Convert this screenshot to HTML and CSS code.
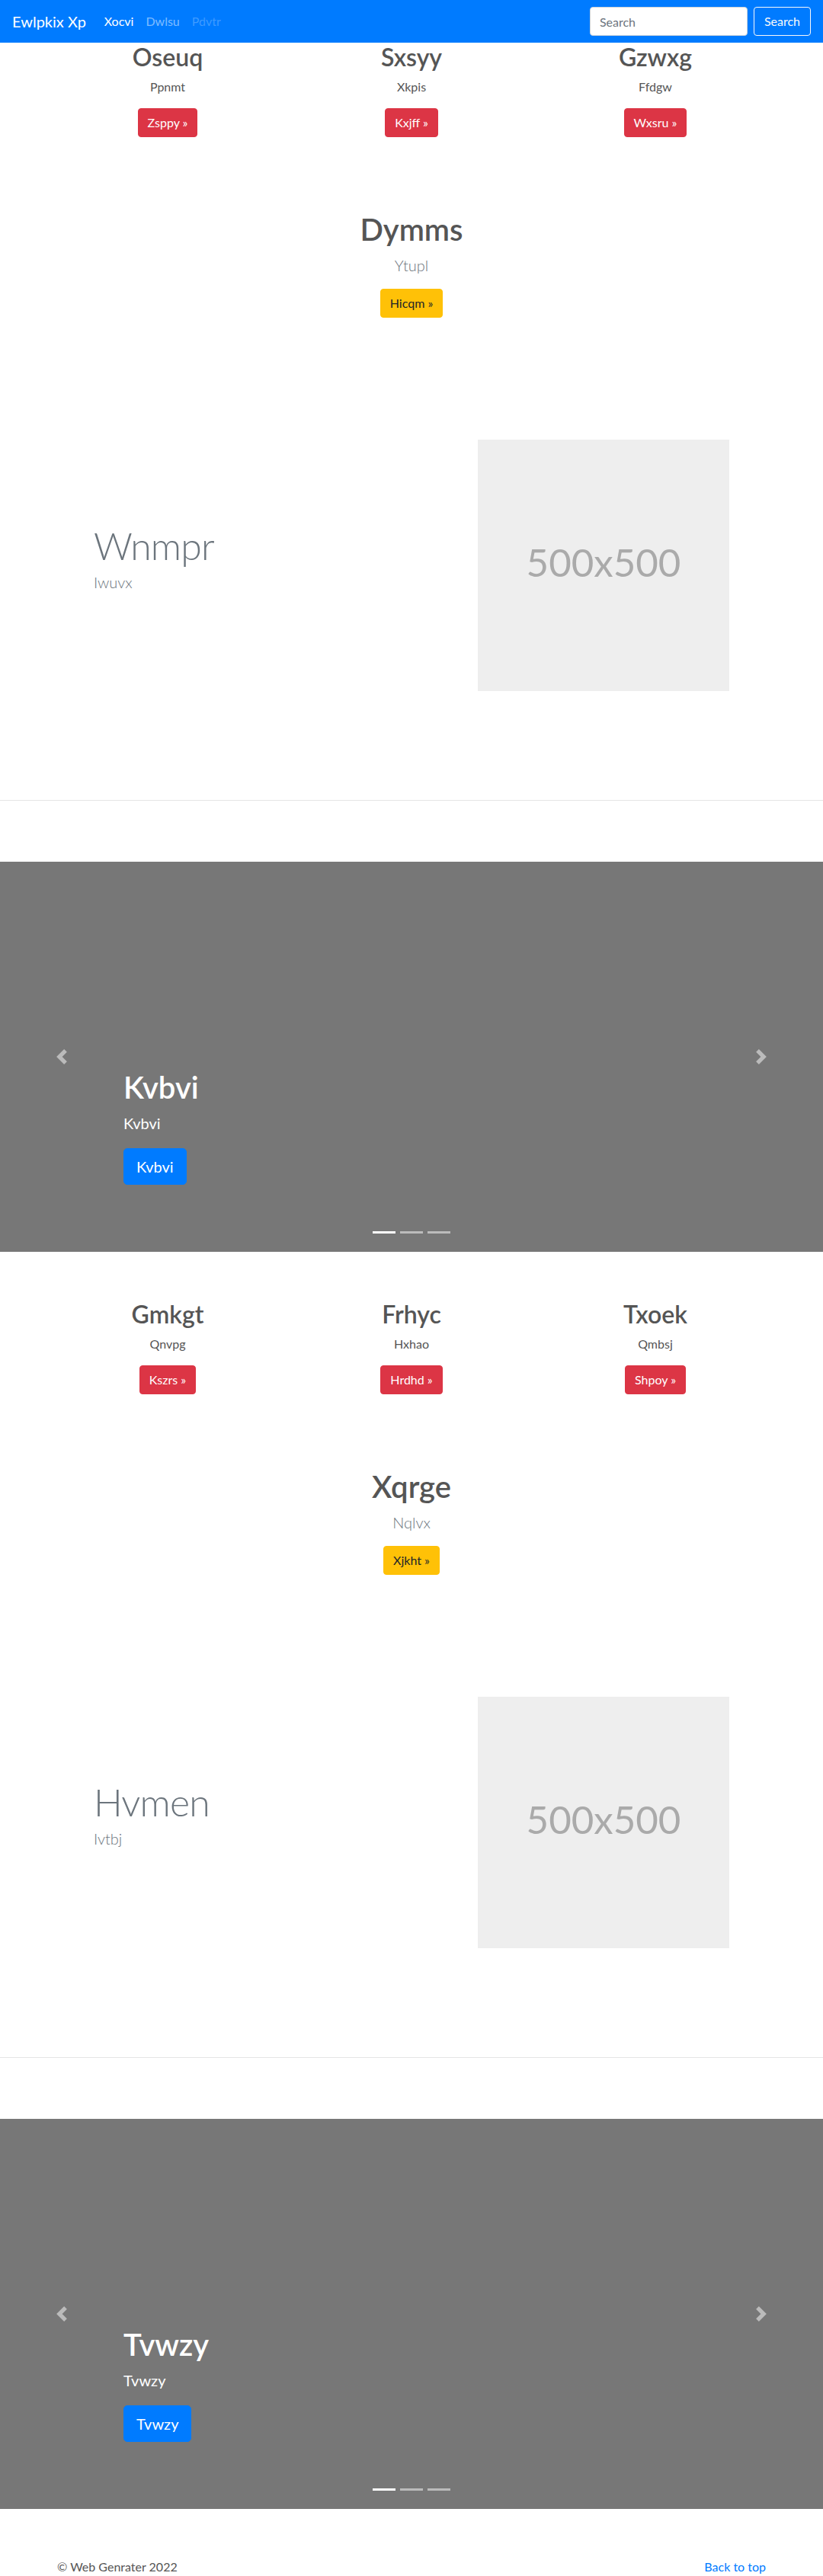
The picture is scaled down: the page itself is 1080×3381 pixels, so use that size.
FILE: index.html
```html
<!DOCTYPE html>
<html lang="en">
<head>
<meta charset="utf-8">
<title>Ewlpkix Xp</title>
<link rel="stylesheet" href="styles.css">
</head>
<body>
<nav class="navbar">
  <a class="brand" href="#">Ewlpkix Xp</a>
  <ul class="nav-links">
    <li><a class="nav-link active" href="#">Xocvi</a></li>
    <li><a class="nav-link" href="#">Dwlsu</a></li>
    <li><a class="nav-link disabled" href="#">Pdvtr</a></li>
  </ul>
  <form class="search">
    <input class="search-input" type="text" placeholder="Search">
    <button class="search-btn" type="button">Search</button>
  </form>
</nav>

<section class="block block-first">
  <div class="marketing">
    <div class="col">
      <h2 class="col-title">Oseuq</h2>
      <p class="col-text">Ppnmt</p>
      <a class="btn btn-danger" href="#">Zsppy &raquo;</a>
    </div>
    <div class="col">
      <h2 class="col-title">Sxsyy</h2>
      <p class="col-text">Xkpis</p>
      <a class="btn btn-danger" href="#">Kxjff &raquo;</a>
    </div>
    <div class="col">
      <h2 class="col-title">Gzwxg</h2>
      <p class="col-text">Ffdgw</p>
      <a class="btn btn-danger" href="#">Wxsru &raquo;</a>
    </div>
  </div>
  <div class="intro">
    <h1 class="intro-title">Dymms</h1>
    <p class="lead">Ytupl</p>
    <a class="btn btn-warning" href="#">Hicqm &raquo;</a>
  </div>
  <div class="featurette">
    <div class="featurette-text">
      <h2 class="featurette-heading">Wnmpr</h2>
      <p class="lead">Iwuvx</p>
    </div>
    <div class="featurette-media">
      <svg class="placeholder" width="330" height="330" viewBox="0 0 330 330" role="img" aria-label="500x500">
        <rect width="100%" height="100%" fill="#eee"/>
        <text x="50%" y="50%" dy=".3em" text-anchor="middle" fill="#aaa">500x500</text>
      </svg>
    </div>
  </div>
</section>
<hr class="divider">
<div class="carousel">
  <div class="carousel-caption">
    <h1 class="caption-title">Kvbvi</h1>
    <p class="caption-text">Kvbvi</p>
    <a class="btn btn-lg btn-primary" href="#">Kvbvi</a>
  </div>
  <a class="control control-prev" href="#" aria-label="Previous">
    <svg width="20" height="20" viewBox="0 0 8 8"><path d="M5.25 0l-4 4 4 4 1.5-1.5L4.25 4l2.5-2.5L5.25 0z"/></svg>
  </a>
  <a class="control control-next" href="#" aria-label="Next">
    <svg width="20" height="20" viewBox="0 0 8 8"><path d="M2.75 0l-1.5 1.5L3.75 4l-2.5 2.5L2.75 8l4-4-4-4z"/></svg>
  </a>
  <ol class="indicators">
    <li class="active"></li>
    <li></li>
    <li></li>
  </ol>
</div>

<section class="block block-second">
  <div class="marketing">
    <div class="col">
      <h2 class="col-title">Gmkgt</h2>
      <p class="col-text">Qnvpg</p>
      <a class="btn btn-danger" href="#">Kszrs &raquo;</a>
    </div>
    <div class="col">
      <h2 class="col-title">Frhyc</h2>
      <p class="col-text">Hxhao</p>
      <a class="btn btn-danger" href="#">Hrdhd &raquo;</a>
    </div>
    <div class="col">
      <h2 class="col-title">Txoek</h2>
      <p class="col-text">Qmbsj</p>
      <a class="btn btn-danger" href="#">Shpoy &raquo;</a>
    </div>
  </div>
  <div class="intro">
    <h1 class="intro-title">Xqrge</h1>
    <p class="lead">Nqlvx</p>
    <a class="btn btn-warning" href="#">Xjkht &raquo;</a>
  </div>
  <div class="featurette featurette-second">
    <div class="featurette-text">
      <h2 class="featurette-heading">Hvmen</h2>
      <p class="lead">Ivtbj</p>
    </div>
    <div class="featurette-media">
      <svg class="placeholder" width="330" height="330" viewBox="0 0 330 330" role="img" aria-label="500x500">
        <rect width="100%" height="100%" fill="#eee"/>
        <text x="50%" y="50%" dy=".3em" text-anchor="middle" fill="#aaa">500x500</text>
      </svg>
    </div>
  </div>
</section>
<hr class="divider">
<div class="carousel">
  <div class="carousel-caption">
    <h1 class="caption-title">Tvwzy</h1>
    <p class="caption-text">Tvwzy</p>
    <a class="btn btn-lg btn-primary" href="#">Tvwzy</a>
  </div>
  <a class="control control-prev" href="#" aria-label="Previous">
    <svg width="20" height="20" viewBox="0 0 8 8"><path d="M5.25 0l-4 4 4 4 1.5-1.5L4.25 4l2.5-2.5L5.25 0z"/></svg>
  </a>
  <a class="control control-next" href="#" aria-label="Next">
    <svg width="20" height="20" viewBox="0 0 8 8"><path d="M2.75 0l-1.5 1.5L3.75 4l-2.5 2.5L2.75 8l4-4-4-4z"/></svg>
  </a>
  <ol class="indicators">
    <li class="active"></li>
    <li></li>
    <li></li>
  </ol>
</div>

<footer class="footer">
  <p class="footer-copy">&copy; Web Genrater 2022</p>
  <p class="footer-top"><a href="#">Back to top</a></p>
</footer>
</body>
</html>
```

FILE: styles.css
```css
* {
  box-sizing: border-box;
}

html, body {
  margin: 0;
  padding: 0;
}

body {
  font-family: Lato, "Noto Sans", "Liberation Sans", sans-serif;
  font-size: 16px;
  line-height: 24px;
  color: #555;
  background: #fff;
  overflow-x: hidden;
}

a {
  text-decoration: none;
}

/* ---------- Navbar ---------- */
.navbar {
  height: 56px;
  background: #007bff;
  display: flex;
  align-items: center;
  padding: 8px 16px;
}

.brand {
  color: #fff;
  font-size: 20px;
  line-height: 30px;
  padding: 5px 0;
  margin-right: 16px;
}

.nav-links {
  list-style: none;
  margin: 0;
  padding: 0;
  display: flex;
  flex: 1;
}

.nav-link {
  display: block;
  padding: 8px;
  line-height: 24px;
  color: rgba(255, 255, 255, 0.5);
}

.nav-link.active {
  color: #fff;
}

.nav-link.disabled {
  color: rgba(255, 255, 255, 0.25);
}

.search {
  display: flex;
  align-items: center;
  gap: 8px;
}

.search-input {
  width: 207px;
  height: 38px;
  padding: 6px 12px;
  border: 1px solid #ced4da;
  border-radius: 4px;
  font-family: inherit;
  font-size: 16px;
  color: #495057;
  background: #fff;
}

.search-input::placeholder {
  color: #6c757d;
}

.search-btn {
  height: 38px;
  padding: 6px 13px;
  border: 1px solid #f8f9fa;
  border-radius: 4px;
  background: transparent;
  color: #f8f9fa;
  font-family: inherit;
  font-size: 16px;
  line-height: 24px;
}

/* ---------- Buttons ---------- */
.btn {
  display: inline-block;
  padding: 6px 12px;
  border: 1px solid transparent;
  border-radius: 4px;
  font-size: 16px;
  line-height: 24px;
}

.btn-danger {
  background: #dc3545;
  border-color: #dc3545;
  color: #fff;
}

.btn-warning {
  background: #ffc107;
  border-color: #ffc107;
  color: #212529;
}

.btn-primary {
  background: #007bff;
  border-color: #007bff;
  color: #fff;
}

.btn-lg {
  padding: 8px 16px;
  font-size: 20px;
  line-height: 30px;
  border-radius: 5px;
}

/* ---------- Blocks ---------- */
.block-second {
  padding-top: 63px;
}

.marketing {
  width: 960px;
  margin: 0 auto;
  display: grid;
  grid-template-columns: repeat(3, 1fr);
}

.col {
  display: flex;
  flex-direction: column;
  align-items: center;
  text-align: center;
}

.col-title {
  margin: 0 0 8px;
  font-size: 32px;
  line-height: 38px;
  font-weight: 600;
  color: #555;
}

.col-text {
  margin: 0 0 16px;
}

.intro {
  margin-top: 97px;
  display: flex;
  flex-direction: column;
  align-items: center;
  text-align: center;
}

.intro-title {
  margin: 0 0 8px;
  font-size: 40px;
  line-height: 48px;
  font-weight: 600;
  color: #555;
}

.lead {
  margin: 0 0 16px;
  font-size: 20px;
  line-height: 30px;
  font-weight: 300;
  color: #6c757d;
}

.featurette {
  width: 864px;
  margin: 160px auto 0;
  display: grid;
  grid-template-columns: 7fr 5fr;
}

.featurette-text {
  padding: 0 15px;
}

.featurette-heading {
  margin: 114px 0 8px;
  font-size: 50px;
  line-height: 50px;
  font-weight: 300;
  letter-spacing: -0.8px;
  color: #6c757d;
}

.featurette-second .featurette-heading {
  margin-top: 113px;
}

.featurette-text .lead {
  margin-bottom: 0;
}

.featurette-media {
  padding: 0 15px;
}

.placeholder {
  display: block;
  width: 330px;
  height: 330px;
}

.placeholder text {
  font-family: Lato, "Noto Sans", sans-serif;
  font-size: 51px;
  font-weight: 400;
}

.divider {
  margin: 143px 0 80px;
  border: 0;
  border-top: 1px solid rgba(0, 0, 0, 0.1);
  height: 0;
}

/* ---------- Carousel ---------- */
.carousel {
  position: relative;
  height: 512px;
  background: #777;
}

.carousel-caption {
  position: absolute;
  left: 162px;
  bottom: 88px;
  color: #fff;
  display: flex;
  flex-direction: column;
  align-items: flex-start;
}

.caption-title {
  margin: 0 0 8px;
  font-size: 40px;
  line-height: 48px;
  font-weight: 600;
  color: #fff;
}

.caption-text {
  margin: 0 0 18px;
  font-size: 20px;
  line-height: 30px;
}

.control {
  position: absolute;
  top: 0;
  bottom: 0;
  width: 15%;
  display: flex;
  align-items: center;
  justify-content: center;
  opacity: 0.5;
}

.control svg {
  fill: #fff;
}

.control-prev {
  left: 0;
}

.control-next {
  right: 0;
}

.indicators {
  position: absolute;
  left: 0;
  right: 0;
  bottom: 24px;
  margin: 0;
  padding: 0;
  list-style: none;
  display: flex;
  justify-content: center;
  gap: 6px;
}

.indicators li {
  width: 30px;
  height: 3px;
  background: rgba(255, 255, 255, 0.5);
}

.indicators li.active {
  background: #fff;
}

/* ---------- Footer ---------- */
.footer {
  width: 960px;
  margin: 64px auto 0;
  padding: 0 15px;
  display: flex;
  justify-content: space-between;
}

.footer p {
  margin: 0;
  line-height: 24px;
}

.footer-top a {
  color: #007bff;
}
```
